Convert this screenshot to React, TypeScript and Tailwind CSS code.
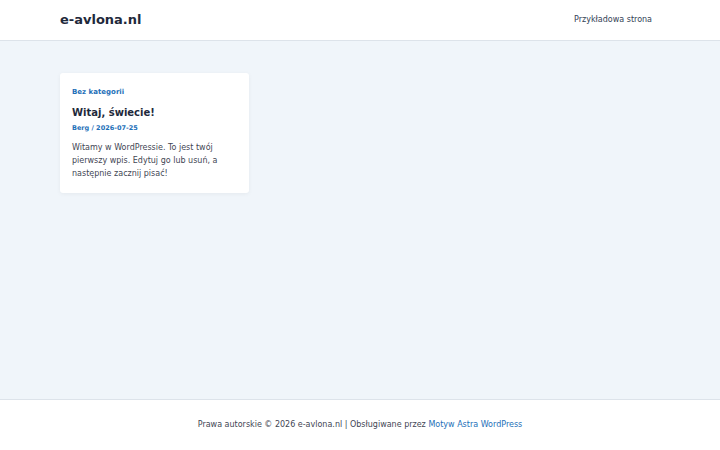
export default function App() {
  return (
    <div className="flex min-h-[450px] flex-col bg-[#f0f5fa] font-['DejaVu_Sans',sans-serif] text-[#3a3a3a]">
      <header className="h-[41px] border-b border-[#dde3ea] bg-white">
        <div className="mx-[60px] flex h-[40px] items-center justify-between">
          <a className="text-[13px] font-bold text-[#1e293b]">e-avlona.nl</a>
          <nav className="mr-[8px] text-[8px] text-[#334155]">Przykładowa strona</nav>
        </div>
      </header>

      <main className="flex-1 px-[60px] pt-[32px]">
        <article className="w-[189px] rounded-[3px] bg-white px-[12px] pt-[14px] pb-[13px] shadow-[0_1px_4px_rgba(0,0,0,0.05)]">
          <div className="text-[7px] font-bold leading-[10px] text-[#1d6fb8]">Bez kategorii</div>
          <h2 className="mt-[8px] text-[10px] font-bold leading-[15px] text-[#1e293b]">Witaj, świecie!</h2>
          <div className="mt-[3px] text-[6.5px] font-bold leading-[10px] text-[#1d6fb8]">Berg / 2026-07-25</div>
          <p className="mt-[8px] text-[8px] leading-[13px] text-[#3f4654]">
            Witamy w WordPressie. To jest twój pierwszy wpis. Edytuj go lub usuń, a następnie zacznij pisać!
          </p>
        </article>
      </main>

      <footer className="flex h-[51px] items-center justify-center border-t border-[#dde3ea] bg-white text-[8px] text-[#3f4654]">
        <span>
          Prawa autorskie © 2026 e-avlona.nl | Obsługiwane przez{" "}
          <a className="text-[#1d6fb8]">Motyw Astra WordPress</a>
        </span>
      </footer>
    </div>
  );
}
